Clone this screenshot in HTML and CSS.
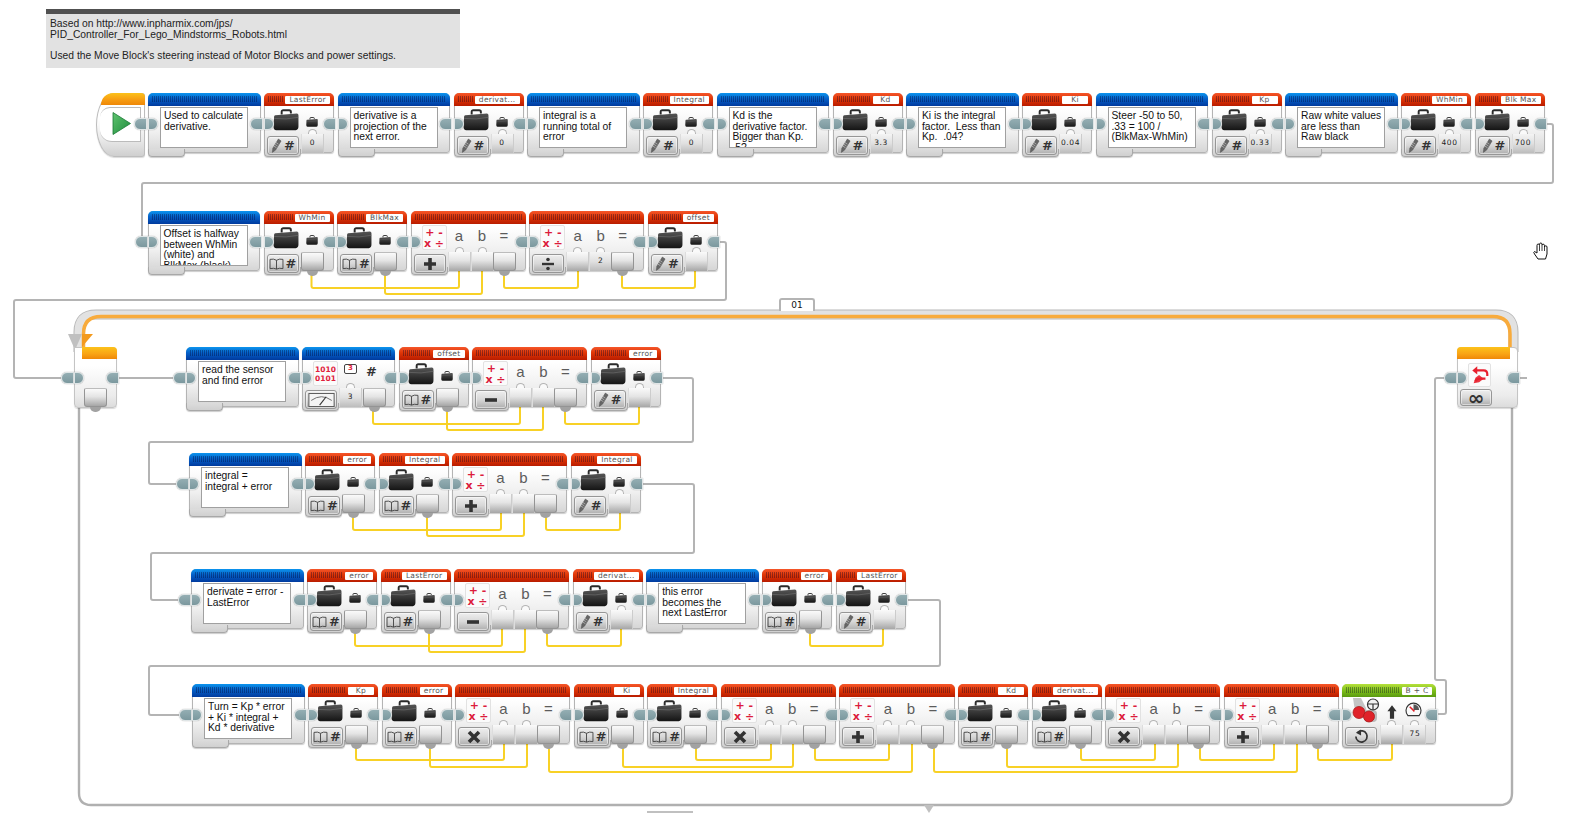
FILE: index.html
```html
<!DOCTYPE html>
<html lang="en">
<head>
    <meta charset="UTF-8">
    <meta name="viewport" content="width=device-width, initial-scale=1.0">
    <title>PID Line Follower</title>
    <link rel="stylesheet" href="styles.css">
</head>
<body>
    <svg class="defs" width="0" height="0">
        <defs>
            <linearGradient id="caseFill" x1="0" y1="0" x2="0" y2="1">
                <stop offset="0" stop-color="#555"/>
                <stop offset="1" stop-color="#141414"/>
            </linearGradient>
            <linearGradient id="playFill" x1="0" y1="0" x2="1" y2="1">
                <stop offset="0" stop-color="#5fc46f"/>
                <stop offset="1" stop-color="#1d8a3c"/>
            </linearGradient>
            <symbol id="case" viewBox="0 0 24 20">
                <path d="M8 5V2.500Q8 1 9.500 1H15Q16.500 1 16.500 2.500V4" fill="none" stroke="#2a2a2a" stroke-width="1.800"/>
                <path d="M2 5.500Q1 5.500 1 7L.5 16Q.5 19.500 3 19.500H21Q23.500 19 23.500 16V5.500Q23.500 4 22 4Z" fill="url(#caseFill)"/>
                <path d="M1 8.500Q12 10 23.500 7.500" fill="none" stroke="#777" stroke-width=".5"/>
            </symbol>
            <symbol id="pencil" viewBox="0 0 12 16">
                <path d="M8 1L11 3 5 13 1.500 15.500 2 11Z" fill="#666" stroke="#555" stroke-width=".6"/>
                <path d="M5 4.500L8 6.500M4 6.500L7 8.500M3 8.500L6 10.500" stroke="#ccc" stroke-width=".7"/>
            </symbol>
            <symbol id="book" viewBox="0 0 16 13">
                <path d="M8 2.500Q5 .5 1 1.500V11.500Q5 10.500 8 12 11 10.500 15 11.500V1.500Q11 .5 8 2.500V12" fill="none" stroke="#444" stroke-width="1"/>
            </symbol>
            <symbol id="add" viewBox="0 0 14 14"><path d="M7 1V13M1 7H13" stroke="#333" stroke-width="3.600"/></symbol>
            <symbol id="sub" viewBox="0 0 14 14"><path d="M1 7H13" stroke="#333" stroke-width="3.600"/></symbol>
            <symbol id="mul" viewBox="0 0 14 14"><path d="M2 2L12 12M12 2L2 12" stroke="#333" stroke-width="3.600"/></symbol>
            <symbol id="div" viewBox="0 0 14 14">
                <path d="M1 7H13" stroke="#333" stroke-width="2.400"/>
                <circle cx="7" cy="2.500" r="1.800" fill="#333"/>
                <circle cx="7" cy="11.500" r="1.800" fill="#333"/>
            </symbol>
            <symbol id="meter" viewBox="0 0 28 15">
                <rect x=".5" y=".5" width="27" height="14" fill="#f4f4f4" stroke="#555"/>
                <path d="M3 8Q14 0 25 8" fill="none" stroke="#666"/>
                <path d="M12 13L19 4" stroke="#333" stroke-width="1.200"/>
            </symbol>
            <symbol id="swap" viewBox="0 0 22 22">
                <path d="M5 6H15Q19 6 19 10V12" fill="none" stroke="#e8202e" stroke-width="2.400"/>
                <path d="M8 1.500L2.500 6 8 10.500Z" fill="#e8202e"/>
                <path d="M17 15H11Q7 15 6 18" fill="none" stroke="#e8202e" stroke-width="2.400"/>
                <path d="M10 11L15 15 10 19 4 20 6 14Z" fill="#e8202e" opacity=".9"/>
            </symbol>
            <symbol id="motors" viewBox="0 0 28 26">
                <path d="M1 0H9L14 10 16 20H4Z" fill="#c4c4c4"/>
                <rect x="12" y="12" width="13" height="12" rx="4" fill="#bbb"/>
                <circle cx="7" cy="14.500" r="6" fill="#e0222a" stroke="#a81a1a" stroke-width=".8"/>
                <circle cx="17" cy="18.500" r="5.500" fill="#e0222a" stroke="#a81a1a" stroke-width=".8"/>
                <circle cx="21" cy="6.500" r="5.500" fill="#f2f2f2" stroke="#333" stroke-width="1.200"/>
                <path d="M16 6H26M21 6.500V12" stroke="#333" stroke-width="1.200"/>
            </symbol>
            <symbol id="arrow" viewBox="0 0 12 18"><path d="M6 1L11.500 8H8.500V17H3.500V8H.5Z" fill="#333"/></symbol>
            <symbol id="dial" viewBox="0 0 18 16">
                <path d="M3 14.500A8 8 0 1 1 15 14.500Z" fill="#fafafa" stroke="#333" stroke-width="1.200"/>
                <path d="M9 2.500A6 6 0 0 1 15 8.500L9 8.500Z" fill="#555"/>
                <path d="M5 5L10 10" stroke="#e0222a" stroke-width="1.600"/>
            </symbol>
            <symbol id="reset" viewBox="0 0 16 16">
                <path d="M4 3.500A6 6 0 1 1 2 8" fill="none" stroke="#333" stroke-width="1.800"/>
                <path d="M7.500 .5V7L2 4Z" fill="#333"/>
            </symbol>
        </defs>
    </svg>

    <div class="note">
        <p>Based on http://www.inpharmix.com/jps/<br>PID_Controller_For_Lego_Mindstorms_Robots.html</p>
        <p>Used the Move Block's steering instead of Motor Blocks and power settings.</p>
    </div>

    <svg class="wires" id="wires" width="1569" height="813">
        <path class="frame" d="M79 400V793Q79 805 91 805H1500Q1512 805 1512 793V400"/>
        <path class="seq" d="M1545 124H1551Q1553 124 1553 126V181Q1553 183 1551 183H144Q142 183 142 185V240Q142 242 140 242H136"/>
        <path class="seq" d="M718 242H724Q726 242 726 244V298Q726 300 724 300H16Q14 300 14 302V376Q14 378 16 378H64"/>
        <path class="seq" d="M116 378H176"/>
        <path class="seq" d="M660 378H691Q693 378 693 380V440Q693 442 691 442H151Q149 442 149 444V482Q149 484 151 484H178"/>
        <path class="seq" d="M642 484H692Q694 484 694 486V551Q694 553 692 553H153Q151 553 151 555V598Q151 600 153 600H180"/>
        <path class="seq" d="M905 600H938Q940 600 940 602V664Q940 666 938 666H151Q149 666 149 668V713Q149 715 151 715H182"/>
        <path class="seq" d="M1437 714H1444Q1446 714 1446 712V682Q1446 680 1444 680H1437Q1435 680 1435 678V380Q1435 378 1437 378H1448"/>
        <path class="seq" d="M1516 378H1527"/>
        <path class="band-edge" d="M78.500 352V332Q78.500 314.500 96 314.500H1496Q1513.500 314.500 1513.500 332V352"/>
        <path class="band" d="M78.500 352V332Q78.500 314.500 96 314.500H1496Q1513.500 314.500 1513.500 332V352"/>
        <path class="loop-line" d="M83.500 347V334Q83.500 316.500 101 316.500H1493Q1510 316.500 1510 334V347"/>
        <path class="notch" d="M68 334H82L75 350Z"/>
        <path class="loop-tip" d="M82 334H93L82 347Z"/>
        <path class="notch" d="M924 805H934L929 813Z"/>
        <rect class="notch" x="647" y="811" width="46" height="2"/>
    </svg>

    <div class="canvas" id="canvas">
        <div class="loop-tab">01</div>

        <div class="start">
            <div class="start-head"></div>
            <div class="start-panel">
                <svg width="19" height="23" viewBox="0 0 19 23"><path d="M1 .5L18.500 11.500 1 22.500Z" fill="url(#playFill)" stroke="#1b7a36" stroke-width=".8"/></svg>
            </div>
            <span class="pill pill-out"></span>
        </div>

        <div class="loop-start">
            <div class="loop-head"></div>
            <span class="pill pill-wire"></span>
            <span class="pill pill-in"></span>
            <span class="pill pill-out"></span>
            <span class="slot slot-out loop-slot"></span>
        </div>

        <div class="loop-end">
            <div class="loop-head"></div>
            <span class="pill pill-wire"></span>
            <span class="pill pill-in"></span>
            <span class="pill pill-out"></span>
            <span class="icon-box loop-icon"><svg width="20" height="20"><use href="#swap"/></svg></span>
            <span class="mode loop-mode">∞</span>
        </div>

        <svg class="hand" width="18" height="19" viewBox="0 0 18 19">
            <path d="M6 17L2.500 12Q1 10 2.500 9.500L5 11V3.500Q5 2 6.200 2T7.500 3.500V2.500Q7.500 1 8.800 1T10 2.500V3.500Q10 2.200 11.200 2.200T12.500 3.500V5Q12.500 3.800 13.700 3.800T15 5V12L13.500 17Z" fill="#fff" stroke="#111" stroke-width="1"/>
            <path d="M7.500 4V9M10 4V9M12.500 5V9" stroke="#111" stroke-width=".8"/>
        </svg>
    </div>

    <script src="blocks.js"></script>
</body>
</html>
```

FILE: styles.css
```css
body {
    margin: 0;
    width: 1569px;
    height: 813px;
    overflow: hidden;
    position: relative;
    background: #fff;
    font-family: "Liberation Sans", Arial, sans-serif;
}
.defs {
    position: absolute;
}
.note {
    position: absolute;
    left: 46px;
    top: 9px;
    width: 414px;
    height: 59px;
    box-sizing: border-box;
    border-top: 5px solid #505050;
    background: #e2e2e2;
    padding: 5px 4px;
    font-size: 10.3px;
    line-height: 10.7px;
    color: #222;
}
.note p {
    margin: 0 0 10.500px;
}

/* wires */
.wires {
    position: absolute;
    left: 0;
    top: 0;
}
.wires path {
    fill: none;
}
.seq {
    stroke: #b4b4b4;
    stroke-width: 2;
}
.frame {
    stroke: #b0b0b0;
    stroke-width: 2.400;
}
.band-edge {
    stroke: #b8b8b8;
    stroke-width: 10;
}
.band {
    stroke: #e2e2e2;
    stroke-width: 8;
}
.loop-line {
    stroke: #f8ab3c;
    stroke-width: 3.500;
}
.wires .notch {
    fill: #c0c0c0;
}
.wires .loop-tip {
    fill: #f39a1e;
}
.data {
    stroke: #f8d126;
    stroke-width: 2;
}

/* blocks */
.canvas {
    position: absolute;
    left: 0;
    top: 0;
    width: 1569px;
    height: 813px;
}
.row {
    position: absolute;
    display: flex;
    gap: 3.500px;
}
.block {
    position: relative;
    height: 60px;
    box-sizing: border-box;
    border: 1px solid #b4b4b4;
    border-radius: 5px 5px 3px 3px;
    background: linear-gradient(#fff 25%, #f0f0f0 65%, #d6d6d6);
    box-shadow: 0 1px 1px rgba(0, 0, 0, .2);
}
.block::after {
    content: "";
    position: absolute;
    left: -1px;
    top: 55px;
    width: 37px;
    height: 8px;
    box-sizing: border-box;
    border: 1px solid #a8a8a8;
    border-top: 0;
    border-radius: 0 0 4px 4px;
    background: linear-gradient(#dcdcdc, #d0d0d0);
    box-shadow: 0 1px 1px rgba(0, 0, 0, .2);
}
.comment { width: 112.500px; }
.var { width: 70px; }
.math { width: 115.200px; }
.log { width: 93px; }
.move { width: 94px; }

.head {
    display: flex;
    align-items: center;
    gap: 2px;
    height: 12px;
    margin: -1px -1px 0;
    padding: 0 4px 1px;
    border-radius: 5px 5px 0 0;
    overflow: hidden;
}
.head.blue { background: linear-gradient(#0b94ee, #0560c8 45%, #003a9e); }
.head.red { background: linear-gradient(#f5562a, #e03606 45%, #b81c00); }
.head.green { background: linear-gradient(#b6e03c, #83c41c 45%, #5a9a10); }
.dots {
    flex: 1;
    height: 6px;
    background: repeating-linear-gradient(90deg, rgba(0, 0, 40, .35) 0 1px, transparent 1px 2px);
}
.tag {
    flex: none;
    min-width: 26px;
    height: 8px;
    margin-top: 1px;
    padding: 0 4px;
    box-sizing: border-box;
    background: #fff;
    border-radius: 1px;
    font: 7.500px/8px "DejaVu Sans", sans-serif;
    letter-spacing: .3px;
    text-align: center;
    color: #555;
    white-space: nowrap;
}
.text {
    position: absolute;
    left: 11px;
    top: 13px;
    width: 88px;
    height: 41px;
    box-sizing: border-box;
    padding: 3px 3px;
    overflow: hidden;
    border: 1px solid #a0a0a0;
    background: #fff;
    font-size: 10.300px;
    line-height: 10.500px;
    color: #111;
    white-space: pre;
}
.big-case {
    position: absolute;
    left: 8px;
    top: 15px;
}
.small-case {
    position: absolute;
    left: 41px;
    top: 19px;
}
.mode {
    position: absolute;
    z-index: 2;
    left: 2px;
    top: 42px;
    width: 32px;
    height: 19px;
    box-sizing: border-box;
    display: flex;
    align-items: center;
    justify-content: center;
    gap: 2px;
    border: 1px solid #969696;
    border-radius: 3px;
    background: linear-gradient(#eee, #d8d8d8 50%, #aeaeae);
    box-shadow: inset 0 0 0 1px rgba(255, 255, 255, .5);
    font: bold 13px/1 "DejaVu Sans", sans-serif;
    color: #333;
}

/* slots and value boxes */
.slot {
    position: absolute;
    top: 40px;
    width: 23px;
    height: 19px;
    box-sizing: border-box;
    background: linear-gradient(#fafafa, #e4e4e4 45%, #a6a6a6);
}
.slot-in, .slot-value {
    border-left: 1px solid #ddd;
    border-right: 1px solid #ccc;
}
.slot-in::before, .slot-value::before {
    content: "";
    position: absolute;
    left: 6px;
    top: -5px;
    width: 9px;
    height: 5px;
    box-sizing: border-box;
    border: 1px solid #b4b4b4;
    border-bottom: 0;
    border-radius: 5px 5px 0 0;
    background: #fafafa;
}
.slot-out {
    z-index: 1;
    border: 1px solid #949494;
    border-top-color: #bcbcbc;
    border-radius: 2px 2px 3px 3px;
}
.slot-out::after {
    content: "";
    position: absolute;
    left: 5px;
    bottom: -6px;
    width: 11px;
    height: 5px;
    border-radius: 0 0 6px 6px;
    background: #a2a2a2;
}
.slot-value {
    font: 7.500px/17px "DejaVu Sans", sans-serif;
    letter-spacing: .6px;
    text-align: center;
    color: #222;
    background: linear-gradient(#f4f4f4, #e0e0e0 50%, #bcbcbc);
}
.slot-value b {
    position: relative;
    font-weight: normal;
}
.letter {
    position: absolute;
    top: 15px;
    width: 23px;
    text-align: center;
    font-size: 15px;
    line-height: 18px;
    color: #5c5c5c;
}
.icon-box {
    position: absolute;
    left: 10px;
    top: 13px;
    width: 25px;
    height: 25px;
    box-sizing: border-box;
    display: flex;
    align-items: center;
    justify-content: center;
    border: 1px solid #e2e2e2;
    border-radius: 2px;
    background: #fbfbfb;
}
.ops {
    font: bold 11px/11px "DejaVu Sans", sans-serif;
    color: #dc1c3c;
    text-align: center;
    white-space: pre;
}
.bits {
    font: bold 7.500px/9px "DejaVu Sans", sans-serif;
    color: #e0203c;
    text-align: center;
    white-space: pre;
}
.port-box {
    position: absolute;
    left: 41px;
    top: 16px;
    width: 13px;
    height: 10px;
    box-sizing: border-box;
    border: 1.500px solid #444;
    border-radius: 2px;
    background: #fff;
    font: bold 7px/7px "DejaVu Sans", sans-serif;
    text-align: center;
    color: #e0203c;
}
.hash {
    position: absolute;
    left: 63px;
    top: 17px;
    font: bold 13px/14px "DejaVu Sans", sans-serif;
    color: #333;
}
.move-motors {
    position: absolute;
    left: 9px;
    top: 13px;
}
.move-arrow {
    position: absolute;
    left: 44px;
    top: 18px;
}
.move-dial {
    position: absolute;
    left: 62px;
    top: 17px;
}

/* sequence plugs */
.pill {
    position: absolute;
    z-index: 3;
    top: 24px;
    height: 12px;
    box-sizing: border-box;
    background: linear-gradient(#94aeb3, #7b989e);
    border: 1px solid #dfe5e6;
    box-shadow: 0 0 1px #777;
}
.pill-in {
    left: -1px;
    width: 10px;
    border-radius: 0 6px 6px 0;
}
.pill-out {
    right: -3px;
    width: 13px;
    border-radius: 6px 0 0 6px;
}
.pill-wire {
    left: -14px;
    width: 13px;
    border-radius: 6px 0 0 6px;
}

/* start block and loop ends */
.start {
    position: absolute;
    left: 96px;
    top: 93px;
    width: 49px;
    height: 64px;
    box-sizing: border-box;
    border: 1px solid #bdbdbd;
    border-radius: 18px 3px 3px 18px / 32px 3px 3px 32px;
    background: linear-gradient(#fff 40%, #e8e8e8 75%, #cfcfcf);
    box-shadow: 0 1px 1px rgba(0, 0, 0, .15);
}
.start-head {
    height: 12px;
    margin: -1px -1px 0 4px;
    border-radius: 12px 4px 0 0;
    background: linear-gradient(#fcc21a, #f79d12 55%, #ef8808);
}
.start-panel {
    margin: 2px 3px 0 3px;
    height: 35px;
    box-sizing: border-box;
    padding: 4px 0 0 12px;
    border: 1px solid #bbb;
    border-left: 0;
    border-radius: 10px 0 0 12px;
    background: #fff;
}
.loop-start, .loop-end {
    position: absolute;
    top: 347px;
    height: 61px;
    box-sizing: border-box;
    border: 1px solid #c4c4c4;
    border-radius: 0 4px 4px 4px;
    background: linear-gradient(#fff 30%, #ececec 80%, #dcdcdc);
    box-shadow: 0 1px 1px rgba(0, 0, 0, .15);
}
.loop-start {
    left: 74px;
    width: 43px;
}
.loop-end {
    left: 1457px;
    width: 61px;
    border-radius: 4px;
}
.loop-head {
    position: absolute;
    top: -1px;
    left: 7px;
    right: -1px;
    height: 12px;
    border-radius: 0 4px 0 0;
    background: linear-gradient(#fcc21a, #f9a516 55%, #ef8808);
}
.loop-end .loop-head {
    left: -1px;
    right: 7px;
    border-radius: 4px 0 0 0;
}
.loop-slot {
    left: 9px;
    top: 40px;
}
.loop-icon {
    left: 10px;
    top: 15px;
    width: 23px;
    height: 24px;
}
.loop-mode {
    left: 2px;
    top: 41px;
    width: 32px;
    height: 17px;
    font-size: 20px;
}
.loop-tab {
    position: absolute;
    left: 779px;
    top: 298px;
    width: 36px;
    height: 13px;
    box-sizing: border-box;
    border: 2px solid #b4b4b4;
    border-bottom: 0;
    border-radius: 3px 3px 0 0;
    background: #fff;
    font: 9px/11px "DejaVu Sans", sans-serif;
    text-align: center;
    color: #111;
}
.hand {
    position: absolute;
    left: 1532px;
    top: 242px;
}
```

FILE: blocks.js
```js
// [from x, to x, depth below the row top]
const rows = [
    { x: 148, y: 93, blocks: [
        ["comment", "Used to calculate\nderivative."],
        ["var", "LastError", "pencil", "0"],
        ["comment", "derivative is a\nprojection of the\nnext error."],
        ["var", "derivat...", "pencil", "0"],
        ["comment", "integral is a\nrunning total of\nerror"],
        ["var", "Integral", "pencil", "0"],
        ["comment", "Kd is the\nderivative factor.\nBigger than Kp.\n.5?"],
        ["var", "Kd", "pencil", "3.3"],
        ["comment", "Ki is the integral\nfactor.  Less than\nKp.  .04?"],
        ["var", "Ki", "pencil", "0.04"],
        ["comment", "Steer -50 to 50,\n.33 = 100 /\n(BlkMax-WhMin)"],
        ["var", "Kp", "pencil", "0.33"],
        ["comment", "Raw white values\nare less than\nRaw black"],
        ["var", "WhMin", "pencil", "400"],
        ["var", "Blk Max", "pencil", "700"]
    ], wires: [] },
    { x: 147.500, y: 211, plug: true, blocks: [
        ["comment", "Offset is halfway\nbetween WhMin\n(white) and\nBlkMax (black)"],
        ["var", "WhMin", "book", "out"],
        ["var", "BlkMax", "book", "out"],
        ["math", "add"],
        ["math", "div", "2"],
        ["var", "offset", "pencil", "in"]
    ], wires: [[311.500, 459, 77], [385, 482, 83], [504, 578, 77], [622, 695, 77]] },
    { x: 186, y: 347, plug: true, blocks: [
        ["comment", "read the sensor\nand find error"],
        ["log"],
        ["var", "offset", "book", "out"],
        ["math", "sub"],
        ["var", "error", "pencil", "in"]
    ], wires: [[373, 520, 77], [447, 543, 83], [565, 639, 77]] },
    { x: 189, y: 453, plug: true, blocks: [
        ["comment", "integral =\nintegral + error"],
        ["var", "error", "book", "out"],
        ["var", "Integral", "book", "out"],
        ["math", "add"],
        ["var", "Integral", "pencil", "in"]
    ], wires: [[353, 501, 77], [427, 524, 83], [546, 620, 77]] },
    { x: 191, y: 569, plug: true, blocks: [
        ["comment", "derivate = error -\nLastError"],
        ["var", "error", "book", "out"],
        ["var", "LastError", "book", "out"],
        ["math", "sub"],
        ["var", "derivat...", "pencil", "in"],
        ["comment", "this error\nbecomes the\nnext LastError"],
        ["var", "error", "book", "out"],
        ["var", "LastError", "pencil", "in"]
    ], wires: [[355, 502, 77], [429, 525, 83], [547, 621, 77], [810, 883, 77]] },
    { x: 192, y: 684, plug: true, blocks: [
        ["comment", "Turn = Kp * error\n+ Ki * integral +\nKd * derivative"],
        ["var", "Kp", "book", "out"],
        ["var", "error", "book", "out"],
        ["math", "mul"],
        ["var", "Ki", "book", "out"],
        ["var", "Integral", "book", "out"],
        ["math", "mul"],
        ["math", "add"],
        ["var", "Kd", "book", "out"],
        ["var", "derivat...", "book", "out"],
        ["math", "mul"],
        ["math", "add"],
        ["move"]
    ], wires: [
        [356, 504, 76], [430, 527, 83], [549, 912, 88],
        [623, 793, 83], [696, 771, 76], [815, 889, 76],
        [934, 1297, 88], [1007, 1178, 83], [1081, 1155, 76],
        [1200, 1274, 76], [1318, 1392, 76]
    ] }
];

function use(id, w, h) {
    return `<svg width="${w}" height="${h}"><use href="#${id}"/></svg>`;
}

function slot(kind, left, value) {
    let inner = value ? `<b>${value}</b>` : "";
    return `<span class="slot slot-${kind}" style="left:${left}px">${inner}</span>`;
}

function header(color, name) {
    let tag = name ? `<span class="tag">${name}</span>` : "";
    return `<div class="head ${color}"><i class="dots"></i>${tag}</div>`;
}

const pills = `<span class="pill pill-in"></span><span class="pill pill-out"></span>`;

function blockHtml(b) {
    let type = b[0];
    if (type === "comment") {
        return header("blue") + `<div class="text">${b[1]}</div>`;
    }
    if (type === "var") {
        let kind = b[3] === "out" || b[3] === "in" ? b[3] : "value";
        let value = kind === "value" ? b[3] : "";
        let icon = b[2] === "pencil" ? use("pencil", 11, 15) : use("book", 15, 12);
        return header("red", b[1]) +
            `<span class="big-case">${use("case", 26, 22)}</span>` +
            `<span class="small-case">${use("case", 12, 10)}</span>` +
            `<span class="mode">${icon}#</span>` + slot(kind, 36, value);
    }
    if (type === "math") {
        return header("red") +
            `<span class="icon-box"><span class="ops">+ -\nx ÷</span></span>` +
            `<span class="letter" style="left:36px">a</span>` +
            `<span class="letter" style="left:59px">b</span>` +
            `<span class="letter" style="left:81px">=</span>` +
            `<span class="mode">${use(b[1], 14, 14)}</span>` +
            slot("in", 36) + slot(b[2] ? "value" : "in", 59, b[2]) + slot("out", 81);
    }
    if (type === "log") {
        return header("blue") +
            `<span class="icon-box"><span class="bits">1010\n0101</span></span>` +
            `<span class="port-box">3</span><span class="hash">#</span>` +
            `<span class="mode">${use("meter", 27, 14)}</span>` +
            slot("value", 36, "3") + slot("out", 60);
    }
    return header("green", "B + C") +
        `<span class="move-motors">${use("motors", 28, 26)}</span>` +
        `<span class="move-arrow">${use("arrow", 10, 18)}</span>` +
        `<span class="move-dial">${use("dial", 17, 15)}</span>` +
        `<span class="mode">${use("reset", 15, 15)}</span>` + slot("in", 37) + slot("value", 60, "75");
}

const canvas = document.getElementById("canvas");
const wires = document.getElementById("wires");
const first = wires.querySelector(".seq");

rows.forEach(row => {
    let rowDiv = document.createElement("div");
    rowDiv.className = "row";
    rowDiv.style.left = row.x + "px";
    rowDiv.style.top = row.y + "px";
    row.blocks.forEach((b, i) => {
        let plug = row.plug && i === 0 ? `<span class="pill pill-wire"></span>` : "";
        rowDiv.insertAdjacentHTML("beforeend", `<div class="block ${b[0]}">${blockHtml(b)}${plug}${pills}</div>`);
    });
    canvas.appendChild(rowDiv);

    row.wires.forEach(w => {
        let y = row.y + w[2];
        let path = document.createElementNS("http://www.w3.org/2000/svg", "path");
        path.setAttribute("class", "data");
        path.setAttribute("d", `M${w[0]} ${row.y + 60}V${y - 2}Q${w[0]} ${y} ${w[0] + 2} ${y}H${w[1] - 2}Q${w[1]} ${y} ${w[1]} ${y - 2}V${row.y + 55}`);
        wires.insertBefore(path, first);
    });
});
```
